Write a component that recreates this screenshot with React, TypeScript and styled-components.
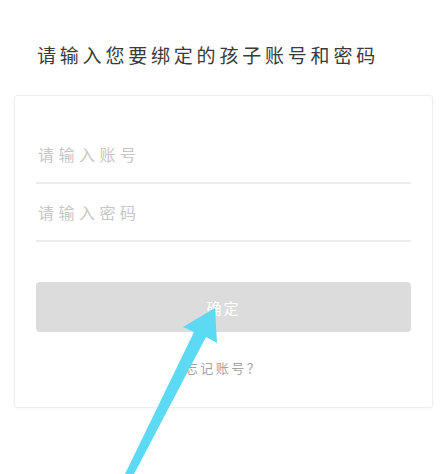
import styled, { createGlobalStyle } from 'styled-components';

const GlobalStyle = createGlobalStyle`
  html, body {
    margin: 0;
    padding: 0;
    background: #ffffff;
    font-family: "Noto Sans CJK SC", "Noto Sans", sans-serif;
  }
`;

const Page = styled.div`
  position: relative;
  width: 446px;
  height: 474px;
  overflow: hidden;
  background: #ffffff;
`;

const Title = styled.h1`
  margin: 0;
  padding: 43px 0 0 37px;
  height: 24px;
  line-height: 24px;
  font-size: 19px;
  font-weight: 400;
  letter-spacing: 3.8px;
  color: #3a3a3a;
  white-space: nowrap;
`;

const Card = styled.div`
  margin: 28px 13px 0 14px;
  padding: 30px 21px 0;
  height: 313px;
  border: 1px solid #efefef;
  border-radius: 3px;
  box-shadow: 0 1px 3px rgba(0, 0, 0, 0.04);
  box-sizing: border-box;
`;

const Field = styled.input`
  display: block;
  width: 100%;
  height: 58px;
  box-sizing: border-box;
  margin: 0;
  padding: 0 0 0 2px;
  border: none;
  border-bottom: 2px solid #ececec;
  outline: none;
  background: transparent;
  font-family: inherit;
  font-size: 16px;
  letter-spacing: 4.5px;
  color: #333;

  &::placeholder {
    color: #c6c6c6;
  }
`;

const SubmitButton = styled.button`
  display: block;
  width: 100%;
  height: 50px;
  margin-top: 40px;
  border: none;
  border-radius: 4px;
  background: #dcdcdc;
  color: #ffffff;
  font-family: inherit;
  font-size: 15px;
  letter-spacing: 2px;
`;

const Forgot = styled.div`
  margin-top: 27px;
  text-align: center;
  font-size: 13px;
  line-height: 18px;
  letter-spacing: 2.5px;
  color: #a3a3a3;
`;

const Arrow = styled.svg`
  position: absolute;
  left: 0;
  top: 0;
  pointer-events: none;
`;

export default function App() {
  return (
    <Page>
      <GlobalStyle />
      <Title>请输入您要绑定的孩子账号和密码</Title>
      <Card>
        <Field placeholder="请输入账号" />
        <Field type="password" placeholder="请输入密码" />
        <SubmitButton>确定</SubmitButton>
        <Forgot>忘记账号？</Forgot>
      </Card>
      <Arrow width="446" height="474" viewBox="0 0 446 474">
        <polygon
          points="215,308 217,343 206,337 134,474 125,474 194,332 183,327"
          fill="#5cd9f3"
        />
      </Arrow>
    </Page>
  );
}
